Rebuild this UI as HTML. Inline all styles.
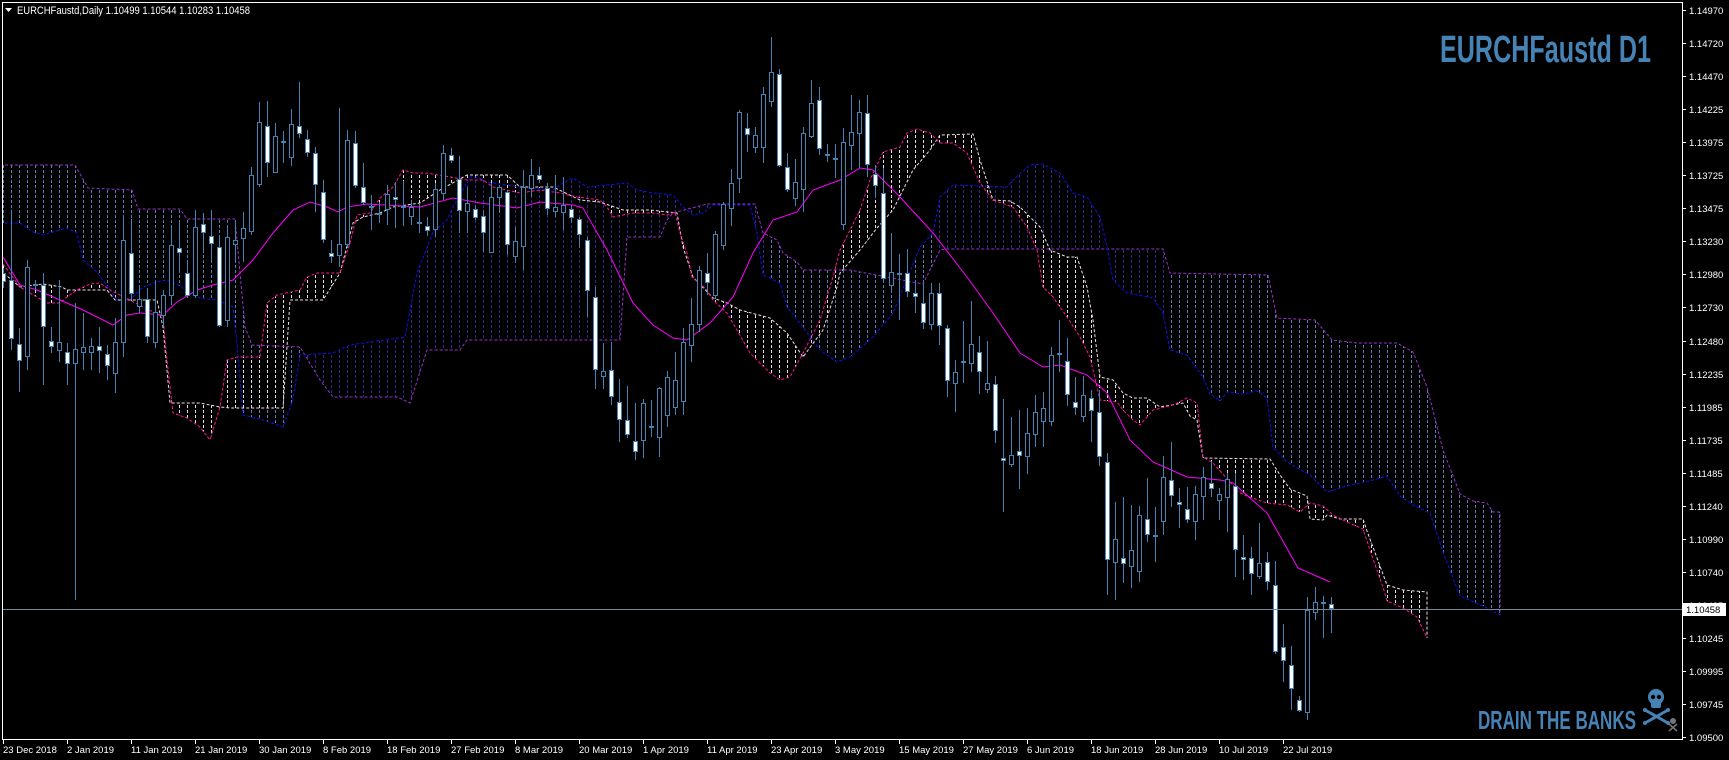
<!DOCTYPE html>
<html><head><meta charset="utf-8"><style>
html,body{margin:0;padding:0;background:#000;width:1729px;height:760px;overflow:hidden}
svg{display:block}
text{font-family:"Liberation Sans",sans-serif}
</style></head><body>
<svg id="s" width="1729" height="760" viewBox="0 0 1729 760" xmlns="http://www.w3.org/2000/svg">
<defs>
<pattern id="hl" width="8" height="5" patternUnits="userSpaceOnUse" x="3" y="0"><rect x="0" y="0" width="1" height="3" fill="#5b80b4"/></pattern>
<pattern id="hd" width="8" height="5" patternUnits="userSpaceOnUse" x="3" y="0"><rect x="0" y="0" width="1" height="3" fill="#2e2e86"/></pattern>
<pattern id="hw" width="8" height="5" patternUnits="userSpaceOnUse" x="3" y="0"><rect x="0" y="0" width="1" height="3" fill="#e8dde4"/></pattern>
<clipPath id="cd"><rect x="300" y="0" width="465" height="740"/><rect x="932" y="0" width="233" height="740"/></clipPath>
<clipPath id="cl"><rect x="0" y="0" width="300" height="740"/><rect x="765" y="0" width="167" height="740"/><rect x="1165" y="0" width="520" height="740"/></clipPath>
<clipPath id="plot"><rect x="3" y="3" width="1679" height="735"/></clipPath>
</defs>
<rect width="1729" height="760" fill="#000"/>
<g id="plotg" clip-path="url(#plot)"></g>
<!-- frame -->
<rect x="2.5" y="2.5" width="1680" height="737" fill="none" stroke="#fff" stroke-width="1"/>
<line x1="3" y1="609.5" x2="1682" y2="609.5" stroke="#778899" stroke-width="1"/>
<g id="axis"></g>
<!-- header -->
<polygon points="5,8 12,8 8.5,12" fill="#fff"/>
<text x="17" y="14" font-size="11" fill="#fff" textLength="233" lengthAdjust="spacingAndGlyphs">EURCHFaustd,Daily  1.10499 1.10544 1.10283 1.10458</text>
<text x="1440" y="62" font-size="38" font-weight="bold" fill="#4682b4" textLength="211" lengthAdjust="spacingAndGlyphs" style="font-family:'Liberation Sans Narrow','Liberation Sans',sans-serif">EURCHFaustd D1</text>
<text x="1478" y="729" font-size="26" font-weight="bold" fill="#4682b4" textLength="158" lengthAdjust="spacingAndGlyphs" style="font-family:'Liberation Sans Narrow','Liberation Sans',sans-serif">DRAIN THE BANKS</text>
<!-- skull -->
<g fill="#4682b4">
<ellipse cx="1656" cy="697" rx="8" ry="8"/>
<rect x="1651" y="702" width="10" height="6" rx="2"/>
<line x1="1645" y1="710" x2="1668" y2="723" stroke="#4682b4" stroke-width="3"/>
<line x1="1668" y1="710" x2="1645" y2="723" stroke="#4682b4" stroke-width="3"/>
<circle cx="1645" cy="710" r="2"/><circle cx="1668" cy="710" r="2"/><circle cx="1645" cy="723" r="2"/><circle cx="1668" cy="723" r="2"/>
</g>
<circle cx="1653" cy="697" r="2.2" fill="#000"/><circle cx="1659" cy="697" r="2.2" fill="#000"/>
<g fill="#777"><circle cx="1673" cy="721" r="3"/><line x1="1669" y1="724" x2="1677" y2="731" stroke="#777" stroke-width="1.5"/><line x1="1677" y1="724" x2="1669" y2="731" stroke="#777" stroke-width="1.5"/></g>
<!-- price box -->
<rect x="1683" y="603" width="43" height="13" fill="#fff"/>
<text x="1686" y="613" font-size="9.5" fill="#000">1.10458</text>
</svg>
<script>
var NS="http://www.w3.org/2000/svg";
function el(t,a,p){var e=document.createElementNS(NS,t);for(var k in a)e.setAttribute(k,a[k]);(p||document.getElementById('plotg')).appendChild(e);return e;}
function pts(a){return a.map(function(p){return p[0]+','+p[1]}).join(' ');}
var blue=[[0,223],[20,223],[33,232],[43,235],[53,232],[67,228],[77,233],[83,260],[97,272],[110,290],[117,300],[130,300],[143,287],[157,282],[167,280],[182,287],[187,293],[200,298],[217,300],[233,307],[237,343],[243,415],[263,420],[283,427],[293,400],[300,355],[333,353],[350,345],[405,337],[417,273],[433,232],[447,220],[453,207],[470,177],[477,177],[487,182],[520,187],[553,190],[563,183],[573,178],[587,187],[607,185],[627,183],[637,190],[653,193],[673,195],[683,207],[693,215],[703,213],[713,205],[750,205],[757,233],[763,275],[780,283],[787,307],[803,327],[820,350],[837,362],[850,357],[873,337],[893,313],[920,247],[933,233],[940,197],[953,185],[1007,187],[1013,180],[1030,165],[1043,164],[1060,173],[1073,193],[1087,197],[1100,217],[1107,247],[1113,280],[1127,293],[1153,298],[1163,313],[1170,350],[1187,355],[1203,377],[1210,394],[1220,401],[1227,392],[1243,394],[1257,391],[1267,398],[1273,447],[1287,462],[1310,475],[1327,492],[1343,487],[1373,480],[1387,476],[1400,496],[1413,505],[1430,513],[1443,552],[1460,596],[1483,606],[1500,615]];
var purp=[[0,165],[75,165],[88,188],[132,190],[138,209],[180,209],[187,219],[235,219],[245,327],[252,345],[300,347],[320,380],[333,397],[397,397],[410,403],[427,350],[460,350],[467,340],[620,340],[627,237],[660,237],[667,220],[673,213],[707,204],[755,204],[763,233],[777,240],[783,253],[797,262],[803,270],[850,270],[840,284],[923,284],[940,250],[947,249],[1163,249],[1170,273],[1268,275],[1277,318],[1315,320],[1332,340],[1357,343],[1397,343],[1413,352],[1427,387],[1443,450],[1460,494],[1473,501],[1487,503],[1493,512],[1500,512],[1500,615]];
// fix ordering glitch
purp=purp.filter(function(p,i){return !(p[0]==840)});
var pink=[[0,260],[20,287],[30,293],[47,303],[60,303],[67,297],[77,290],[90,284],[100,283],[110,290],[163,317],[167,360],[173,413],[187,418],[200,427],[210,440],[220,407],[227,360],[237,357],[260,357],[267,303],[277,295],[300,290],[307,277],[317,273],[340,273],[350,243],[357,215],[370,213],[380,198],[393,187],[403,170],[413,173],[427,173],[467,180],[483,180],[493,187],[520,193],[540,190],[560,193],[577,197],[600,200],[607,207],[613,217],[633,213],[653,213],[667,215],[675,212],[680,233],[687,253],[692,277],[707,290],[713,300],[727,313],[737,330],[750,353],[770,373],[780,380],[790,377],[803,353],[820,320],[833,277],[840,250],[860,210],[870,180],[883,152],[900,147],[907,133],[917,129],[930,133],[940,143],[953,143],[967,153],[973,167],[980,183],[993,200],[1013,207],[1027,227],[1037,250],[1043,287],[1053,297],[1067,317],[1080,337],[1090,357],[1100,400],[1117,402],[1123,410],[1133,420],[1140,425],[1153,410],[1173,405],[1187,398],[1197,403],[1203,457],[1213,463],[1240,493],[1247,496],[1267,503],[1287,505],[1300,512],[1310,503],[1323,506],[1333,515],[1347,522],[1363,529],[1373,559],[1383,587],[1387,601],[1403,608],[1417,617],[1427,638]];
var white=[[0,270],[20,287],[43,284],[62,287],[67,290],[107,290],[115,300],[157,300],[163,327],[170,403],[200,403],[220,407],[230,408],[283,408],[290,300],[323,300],[340,273],[353,223],[363,217],[380,213],[393,207],[420,203],[440,190],[467,175],[507,175],[520,187],[553,187],[580,200],[600,202],[623,210],[650,210],[677,213],[683,247],[693,277],[713,298],[727,303],[740,310],[770,318],[787,333],[803,357],[823,330],[837,287],[840,273],[860,250],[877,228],[893,210],[913,170],[930,150],[940,135],[973,134],[980,160],[993,200],[1010,201],[1020,207],[1040,227],[1050,250],[1067,257],[1077,257],[1087,287],[1093,320],[1100,377],[1113,380],[1123,393],[1133,398],[1147,398],[1160,407],[1183,403],[1190,416],[1197,420],[1203,458],[1270,459],[1280,475],[1290,489],[1307,496],[1310,519],[1323,520],[1327,515],[1340,519],[1363,519],[1367,531],[1387,585],[1403,590],[1427,592],[1427,638]];
var ma=[[3,257],[20,285],[37,290],[60,300],[83,310],[113,325],[127,315],[140,313],[163,315],[177,302],[197,290],[213,285],[233,280],[253,260],[273,233],[293,210],[310,202],[327,207],[338,212],[347,207],[367,204],[420,207],[453,198],[480,203],[517,208],[540,202],[573,205],[583,208],[607,250],[633,303],[653,325],[673,338],[687,340],[710,323],[733,297],[753,253],[773,220],[797,212],[813,190],[840,180],[860,168],[873,170],[900,197],[933,233],[967,277],[993,313],[1020,353],[1043,367],[1060,365],[1087,375],[1107,393],[1130,440],[1153,462],[1187,477],[1220,480],[1233,483],[1267,513],[1298,568],[1330,582]];
var cloud=blue.concat(purp.slice().reverse());
el('polygon',{points:pts(cloud),fill:'url(#hl)','clip-path':'url(#cl)','fill-rule':'evenodd'});
el('polygon',{points:pts(cloud),fill:'url(#hd)','clip-path':'url(#cd)','fill-rule':'evenodd'});
var pw=pink.concat(white.slice().reverse());
el('polygon',{points:pts(pw),fill:'url(#hw)','fill-rule':'evenodd'});
el('polyline',{points:pts(purp),fill:'none',stroke:'#9932cc','stroke-width':1,'stroke-dasharray':'3,2'});
el('polyline',{points:pts(blue),fill:'none',stroke:'#1010e8','stroke-width':1,'stroke-dasharray':'3,2'});
el('polyline',{points:pts(white),fill:'none',stroke:'#f0dde6','stroke-width':1,'stroke-dasharray':'3,2'});
el('polyline',{points:pts(pink),fill:'none',stroke:'#ff1493','stroke-width':1,'stroke-dasharray':'3,2'});
el('polyline',{points:pts(ma),fill:'none',stroke:'#ff00ff','stroke-width':1});
var C=[[273,282,268,288,1],[280,339,213,350,1],[344,361,328,392,1],[267,357,260,370,0],[285,285,280,290,2],[285,327,273,385,1],[341,347,327,353,1],[342,351,280,362,0],[352,364,343,385,1],[349,364,303,600,0],[347,353,313,370,0],[346,353,338,370,0],[346,351,327,373,1],[354,366,345,380,1],[342,374,318,393,0],[240,343,218,357,0],[253,294,219,300,1],[299,307,287,313,0],[299,337,288,343,1],[312,343,280,348,0],[295,316,290,327,0],[245,296,227,305,0],[248,253,222,273,1],[273,296,260,298,1],[227,296,210,298,0],[224,233,213,252,1],[236,244,210,260,1],[247,326,237,327,1],[237,321,227,327,0],[240,245,220,263,0],[228,239,212,262,0],[175,232,167,235,0],[122,185,102,187,0],[126,163,101,177,1],[136,173,123,173,0],[142,142,131,163,2],[124,158,109,166,0],[126,134,82,138,1],[139,153,130,157,1],[153,185,147,212,1],[192,240,180,243,1],[253,257,240,263,1],[244,256,108,267,0],[140,245,130,248,0],[143,186,131,188,1],[187,203,163,205,1],[207,207,195,230,2],[213,215,202,223,1],[194,210,185,225,0],[197,200,182,228,1],[206,208,181,226,1],[207,217,200,225,0],[223,223,203,233,2],[226,231,217,236,1],[189,230,183,237,0],[153,194,145,200,0],[155,161,148,163,1],[179,211,156,233,1],[203,212,187,233,0],[209,218,205,220,1],[216,233,210,252,1],[197,253,183,253,0],[187,198,185,213,0],[192,245,190,255,1],[241,257,227,263,0],[187,247,170,270,0],[175,189,159,197,0],[175,180,167,183,1],[188,209,183,215,1],[207,212,175,217,0],[205,213,177,230,0],[209,218,205,223,1],[219,235,217,248,1],[240,291,237,317,1],[297,370,287,389,1],[371,377,343,389,0],[370,397,342,405,1],[402,420,379,442,1],[420,435,386,438,1],[441,452,403,460,1],[403,441,399,458,0],[427,427,400,437,2],[388,438,387,457,0],[377,416,371,427,0],[380,408,352,415,0],[342,402,328,415,0],[324,346,298,362,0],[270,325,266,332,0],[273,283,253,295,1],[234,296,231,299,0],[204,246,202,250,0],[183,209,169,226,0],[112,179,110,193,0],[128,135,113,152,1],[135,148,127,153,0],[94,148,87,163,0],[72,102,37,107,0],[74,166,69,167,1],[167,190,153,192,1],[182,199,159,206,0],[133,190,127,212,0],[103,137,80,138,0],[100,149,87,155,1],[154,156,144,162,1],[159,159,144,178,2],[142,225,128,230,0],[132,146,95,170,0],[112,134,100,168,0],[113,165,95,177,1],[174,186,165,198,1],[193,279,168,280,1],[272,286,233,291,0],[274,274,254,320,2],[273,292,249,297,1],[293,297,283,313,1],[303,323,283,329,1],[293,325,283,330,0],[293,326,283,345,1],[328,381,325,397,1],[372,384,360,412,0],[362,362,321,383,2],[344,364,301,372,0],[352,372,336,394,1],[383,390,341,393,0],[384,431,376,443,1],[458,461,399,512,1],[455,465,417,467,0],[451,456,410,489,1],[433,457,408,474,0],[412,435,395,447,0],[408,422,392,447,0],[355,422,347,426,0],[353,355,320,372,1],[361,395,338,406,1],[402,408,377,415,1],[395,417,376,422,0],[398,411,390,442,1],[412,457,390,466,1],[462,560,453,595,1],[539,563,502,600,0],[558,564,497,583,1],[550,567,505,588,0],[515,572,506,582,0],[519,535,478,542,1],[536,536,507,562,2],[477,522,456,535,0],[480,496,442,507,1],[502,505,488,528,1],[509,520,487,523,1],[494,522,486,540,0],[477,497,467,520,0],[483,489,461,497,1],[494,501,488,520,0],[479,498,473,532,0],[486,550,473,577,1],[557,560,535,580,1],[558,574,547,595,1],[563,577,523,579,0],[562,582,552,590,1],[585,652,561,654,1],[647,661,624,682,1],[665,689,646,710,1],[700,711,696,712,1],[610,713,597,720,0],[602,613,587,620,0],[603,603,596,638,2],[604,609,597,633,1]];
C.forEach(function(c,i){var x=3+8*i;
 el('line',{x1:x+0.5,y1:c[2],x2:x+0.5,y2:c[3],stroke:'#4682b4','stroke-width':1});
 if(c[4]==2){el('rect',{x:x-2,y:c[0]-1,width:5,height:2,fill:'#4682b4'});}
 else{var h=Math.max(c[1]-c[0],2);el('rect',{x:x-1.5,y:c[0]+0.5,width:4,height:h-1,fill:c[4]==1?'#fff':'#000',stroke:'#4682b4','stroke-width':1});}
});
// axis
var ax=document.getElementById('axis');
var pr=["1.14970","1.14720","1.14470","1.14225","1.13975","1.13725","1.13475","1.13230","1.12980","1.12730","1.12480","1.12235","1.11985","1.11735","1.11485","1.11240","1.10990","1.10740","1.10495","1.10245","1.09995","1.09745","1.09500"];
pr.forEach(function(p,k){var y=Math.round(10+33.05*k);
 el('line',{x1:1682,y1:y+0.5,x2:1686,y2:y+0.5,stroke:'#fff','stroke-width':1},ax);
 var t=el('text',{x:1689,y:y+4,'font-size':'9.5',fill:'#fff'},ax);t.textContent=p;});
var ds=["23 Dec 2018","2 Jan 2019","11 Jan 2019","21 Jan 2019","30 Jan 2019","8 Feb 2019","18 Feb 2019","27 Feb 2019","8 Mar 2019","20 Mar 2019","1 Apr 2019","11 Apr 2019","23 Apr 2019","3 May 2019","15 May 2019","27 May 2019","6 Jun 2019","18 Jun 2019","28 Jun 2019","10 Jul 2019","22 Jul 2019"];
ds.forEach(function(d,k){var x=3+64*k;
 el('line',{x1:x+0.5,y1:740,x2:x+0.5,y2:744,stroke:'#fff','stroke-width':1},ax);
 var t=el('text',{x:x,y:753,'font-size':'9.5',fill:'#fff'},ax);t.textContent=d;});
</script>
</body></html>
